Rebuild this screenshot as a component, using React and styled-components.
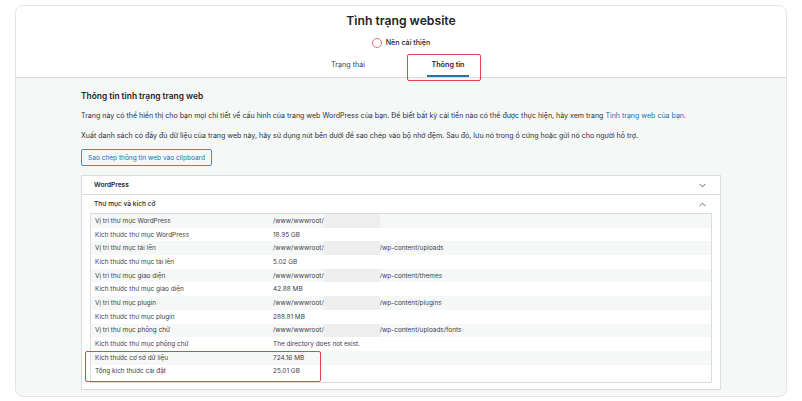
import React from 'react';
import styled, { createGlobalStyle } from 'styled-components';
import { ChevronDown, ChevronUp } from 'lucide-react';

const GlobalStyle = createGlobalStyle`
  html, body { margin: 0; padding: 0; background: #ffffff; }
  body {
    font-family: Inter, "Noto Sans", "Liberation Sans", sans-serif;
    color: #1d2327;
    -webkit-font-smoothing: antialiased;
  }
`;

const Page = styled.div`
  width: 802px;
  height: 401px;
  padding: 5px 15px 4px;
  box-sizing: border-box;
`;

const Card = styled.div`
  height: 100%;
  box-sizing: border-box;
  border: 1px solid #e3e3e3;
  border-radius: 8px;
  overflow: hidden;
  background: #f6f7f7;
  display: flex;
  flex-direction: column;
`;

const Header = styled.header`
  background: #ffffff;
  border-bottom: 1px solid #dcdcde;
  padding-top: 5px;
  display: flex;
  flex-direction: column;
  align-items: center;
`;

const Title = styled.h1`
  margin: 0;
  font-size: 12.2px;
  line-height: 20px;
  font-weight: 600;
`;

const Status = styled.div`
  margin-top: 5px;
  display: flex;
  align-items: center;
  gap: 4px;
  font-size: 7.1px;
  line-height: 14px;
  font-weight: 500;
`;

const StatusRing = styled.span`
  width: 8px;
  height: 8px;
  border: 1.5px solid #e8707c;
  border-radius: 50%;
`;

const Tabs = styled.nav`
  margin-top: 2px;
  display: flex;
  height: 25px;
  margin-left: -6px;
`;

const Tab = styled.div`
  position: relative;
  width: 100px;
  display: flex;
  justify-content: center;
  align-items: stretch;
  font-size: 7.2px;
  font-weight: ${({ active }) => (active ? 600 : 400)};
  color: ${({ active }) => (active ? '#1d2327' : '#3c434a')};
`;

const TabLabel = styled.span`
  display: flex;
  align-items: center;
  padding: 2px 4px 0;
  box-sizing: border-box;
  border-bottom: 2.5px solid ${({ active }) => (active ? '#2271b1' : 'transparent')};
`;

const Annotation = styled.span`
  position: absolute;
  border: 1.5px solid #e0464e;
  border-radius: 2px;
  pointer-events: none;
`;

const TabMark = styled(Annotation)`
  left: 9px;
  top: 2px;
  width: 72px;
  height: 25px;
`;

const Body = styled.main`
  padding: 11px 65px 0;
`;

const SectionTitle = styled.h2`
  margin: 0;
  font-size: 8.4px;
  line-height: 14px;
  font-weight: 600;
`;

const Para = styled.p`
  margin: ${({ first }) => (first ? '7px' : '8px')} 0 0;
  font-size: 7.05px;
  line-height: 12px;
  color: #2c3338;
  white-space: nowrap;
`;

const Link = styled.a`
  color: #2271b1;
  text-decoration: none;
`;

const CopyButton = styled.button`
  margin-top: 7px;
  height: 17px;
  padding: 0 6px;
  font-family: inherit;
  font-size: 6.55px;
  color: #2271b1;
  background: #f6f7f7;
  border: 1px solid #4f8cc6;
  border-radius: 2px;
`;

const Panel = styled.section`
  margin-top: 9px;
  background: #ffffff;
  border: 1px solid #dcdcde;
  padding-bottom: 6px;
`;

const PanelHead = styled.div`
  height: 18px;
  display: flex;
  align-items: center;
  justify-content: space-between;
  padding: 0 12px;
  font-size: 6.6px;
  font-weight: ${({ strong }) => (strong ? 600 : 500)};
  border-bottom: ${({ divided }) => (divided ? '1px solid #dcdcde' : 'none')};
  color: #1d2327;
`;

const InfoTable = styled.div`
  margin: 0 8px;
  border: 1px solid #dcdcde;
  padding-bottom: 4px;
`;

const Row = styled.div`
  height: 13.7px;
  display: grid;
  grid-template-columns: 178px 1fr;
  align-items: stretch;
  background: ${({ striped }) => (striped ? '#f6f7f7' : '#ffffff')};
  font-size: 6.45px;
  color: #3c434a;
`;

const Cell = styled.div`
  display: flex;
  align-items: center;
  padding-left: 4px;
`;

const Blur = styled.span`
  align-self: stretch;
  width: 56px;
  background: #ececec;
  opacity: 0.85;
`;

const Marked = styled.div`
  position: relative;
`;

const RowMark = styled(Annotation)`
  left: -6px;
  top: 0;
  width: 234px;
  bottom: -4px;
`;

const rows = [
  ['Vị trí thư mục WordPress', '/www/wwwroot/', ''],
  ['Kích thước thư mục WordPress', '18.95 GB'],
  ['Vị trí thư mục tải lên', '/www/wwwroot/', '/wp-content/uploads'],
  ['Kích thước thư mục tải lên', '5.02 GB'],
  ['Vị trí thư mục giao diện', '/www/wwwroot/', '/wp-content/themes'],
  ['Kích thước thư mục giao diện', '42.88 MB'],
  ['Vị trí thư mục plugin', '/www/wwwroot/', '/wp-content/plugins'],
  ['Kích thước thư mục plugin', '288.81 MB'],
  ['Vị trí thư mục phông chữ', '/www/wwwroot/', '/wp-content/uploads/fonts'],
  ['Kích thước thư mục phông chữ', 'The directory does not exist.'],
];

const marked = [
  ['Kích thước cơ sở dữ liệu', '724.16 MB'],
  ['Tổng kích thước cài đặt', '25.01 GB'],
];

const InfoRow = ({ item, index }) => {
  const [label, value, tail] = item;
  return (
    <Row striped={index % 2 === 0}>
      <Cell>{label}</Cell>
      <Cell>
        {value}
        {tail !== undefined && <Blur />}
        {tail}
      </Cell>
    </Row>
  );
};

const App = () => (
  <>
    <GlobalStyle />
    <Page>
      <Card>
        <Header>
          <Title>Tình trạng website</Title>
          <Status>
            <StatusRing />
            Nên cải thiện
          </Status>
          <Tabs>
            <Tab>
              <TabLabel>Trạng thái</TabLabel>
            </Tab>
            <Tab active>
              <TabLabel active>Thông tin</TabLabel>
              <TabMark />
            </Tab>
          </Tabs>
        </Header>
        <Body>
          <SectionTitle>Thông tin tình trạng trang web</SectionTitle>
          <Para first>
            Trang này có thể hiển thị cho bạn mọi chi tiết về cấu hình của trang web WordPress của bạn. Để biết bất kỳ cải tiến nào có thể được thực hiện, hãy xem trang{' '}
            <Link href="#">Tình trạng web của bạn.</Link>
          </Para>
          <Para>
            Xuất danh sách có đầy đủ dữ liệu của trang web này, hãy sử dụng nút bên dưới để sao chép vào bộ nhớ đệm. Sau đó, lưu nó trong ổ cứng hoặc gửi nó cho người hỗ trợ.
          </Para>
          <CopyButton>Sao chép thông tin web vào clipboard</CopyButton>
          <Panel>
            <PanelHead strong divided>
              WordPress
              <ChevronDown size={11} strokeWidth={1.5} />
            </PanelHead>
            <PanelHead>
              Thư mục và kích cỡ
              <ChevronUp size={11} strokeWidth={1.5} />
            </PanelHead>
            <InfoTable>
              {rows.map((item, i) => (
                <InfoRow key={item[0]} item={item} index={i} />
              ))}
              <Marked>
                {marked.map((item, i) => (
                  <InfoRow key={item[0]} item={item} index={rows.length + i} />
                ))}
                <RowMark />
              </Marked>
            </InfoTable>
          </Panel>
        </Body>
      </Card>
    </Page>
  </>
);

export default App;
